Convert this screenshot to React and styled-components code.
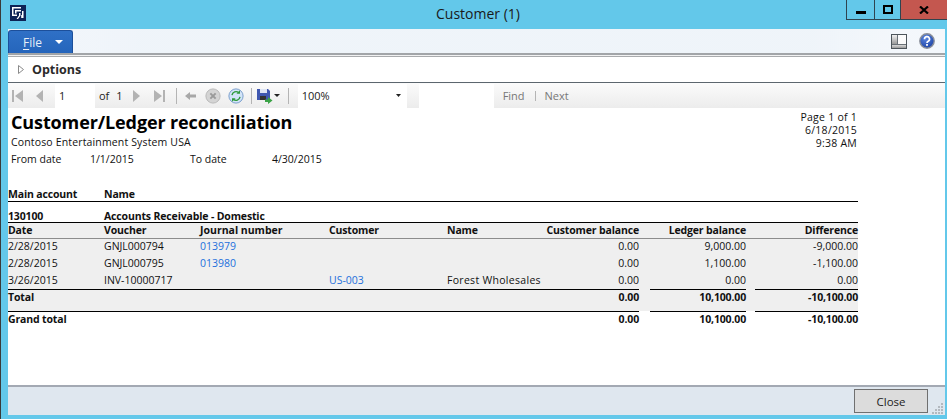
import React from 'react';
import styled, { createGlobalStyle } from 'styled-components';

const GlobalStyle = createGlobalStyle`
  html, body {
    margin: 0;
    padding: 0;
    height: 100%;
    overflow: hidden;
    background: #63c8ea;
    font-family: "Open Sans", "Noto Sans", sans-serif;
    color: #111;
  }
`;

const Window = styled.div`
  width: 947px;
  height: 419px;
  display: flex;
  flex-direction: column;
  background: #63c8ea;
  border-left: 1px solid #3a3a3a;
  box-sizing: border-box;
`;

const TitleBar = styled.div`
  height: 29px;
  flex: none;
  display: flex;
  align-items: flex-start;
  padding-left: 9px;
`;

const AppIcon = styled.svg`
  width: 16px;
  height: 16px;
  margin-top: 5px;
  flex: none;
`;

const TitleText = styled.div`
  flex: 1;
  text-align: center;
  font-size: 14px;
  line-height: 28px;
  color: #1a1a1a;
  padding-left: 84px;
`;

const WinControls = styled.div`
  display: flex;
  height: 19px;
  border-bottom: 1px solid #2f4450;
  border-left: 1px solid #2f4450;
  flex: none;
`;

const WinButton = styled.div`
  width: ${p => p.$w}px;
  display: flex;
  align-items: center;
  justify-content: center;
  background: ${p => p.$close ? '#c4574f' : 'transparent'};
  border-right: ${p => p.$close ? 'none' : '1px solid #2f4450'};
`;

const Client = styled.div`
  flex: 1;
  min-height: 0;
  margin: 0 2px 4px 7px;
  display: flex;
  flex-direction: column;
  background: #fff;
`;

const MenuBar = styled.div`
  height: 24px;
  flex: none;
  display: flex;
  align-items: flex-end;
  justify-content: space-between;
  box-sizing: border-box;
  background:
    radial-gradient(circle at 1px 1px, #e6eef7 0.6px, transparent 0.8px) 0 0 / 2px 2px,
    linear-gradient(90deg, #fff 0, #f6f9fc 14%, #f6f9fc 86%, #fff 95%);
`;

const FileTab = styled.div`
  width: 65px;
  height: 23px;
  box-sizing: border-box;
  display: flex;
  align-items: center;
  gap: 13px;
  padding-left: 14px;
  border: 1px solid #1c4f9a;
  border-bottom: none;
  border-radius: 3px 3px 0 0;
  background: linear-gradient(180deg, #2f70c6 0, #2565bb 100%);
  color: #e8eff8;
  font-size: 12px;

  u { text-underline-offset: 2px; }
`;

const MenuIcons = styled.div`
  display: flex;
  align-items: center;
  gap: 12px;
  margin: 0 10px 4px 0;
`;

const MenuRule = styled.div`
  height: 4px;
  flex: none;
  border-top: 2px solid #a2a5a8;
  border-bottom: 1px solid #a9abad;
  box-sizing: border-box;
  background: #f2f2f2;
`;

const OptionsBar = styled.div`
  height: 26px;
  flex: none;
  display: flex;
  align-items: center;
  gap: 8px;
  padding-left: 10px;
  box-sizing: border-box;
  font-size: 12.5px;
  font-weight: 700;
  color: #2b2b2b;
  background: #fff;
  border-bottom: 1px solid #5c666e;
`;

const Toolbar = styled.div`
  height: 25px;
  flex: none;
  display: flex;
  align-items: center;
  box-sizing: border-box;
  padding-left: 3px;
  background: linear-gradient(180deg, #fbfbfb 0, #ececec 100%);
  font-size: 11px;
  color: #333;
`;

const ToolIcon = styled.svg`
  flex: none;
  width: 16px;
  height: 16px;
  margin-left: ${p => p.$ml || 0}px;
`;

const ToolInput = styled.div`
  flex: none;
  width: ${p => p.$w}px;
  height: 24px;
  margin-left: ${p => p.$ml || 0}px;
  display: flex;
  align-items: center;
  justify-content: space-between;
  box-sizing: border-box;
  padding: 0 6px 0 4px;
  background: #fff;
  color: #222;
`;

const ToolSep = styled.div`
  flex: none;
  width: 1px;
  height: ${p => p.$h || 16}px;
  background: #b4b4b4;
  margin-left: ${p => p.$ml || 0}px;
`;

const ToolLabel = styled.span`
  flex: none;
  margin-left: ${p => p.$ml || 0}px;
  color: ${p => p.$muted ? '#777' : '#222'};
`;

const Caret = styled.svg`
  flex: none;
  margin-left: ${p => p.$ml || 0}px;
`;

const Report = styled.div`
  flex: 1;
  min-height: 0;
  display: flex;
  flex-direction: column;
  background: #fff;
  font-size: 10.5px;
  line-height: 15px;
  color: #111;
  border-bottom: 2px solid #a3a9b3;
`;

const ReportHead = styled.div`
  height: 78px;
  flex: none;
  width: 850px;
  display: flex;
  justify-content: space-between;
  box-sizing: border-box;
  padding: 2px 1px 0 3px;
`;

const ReportTitle = styled.div`
  font-size: 18px;
  font-weight: 700;
  line-height: 25px;
  letter-spacing: -0.12px;
  color: #000;
`;

const Company = styled.div`
  letter-spacing: 0.15px;
`;

const DateLine = styled.div`
  display: grid;
  grid-template-columns: 79px 100px 82px 1fr;
  margin-top: 2px;
`;

const PageInfo = styled.div`
  text-align: right;
  padding-top: 1px;
  line-height: 13px;
  font-size: 10.5px;
  letter-spacing: 0.25px;
`;

const Table = styled.div`
  width: 850px;
  display: flex;
  flex-direction: column;
`;

const Row = styled.div`
  display: grid;
  grid-template-columns: 96px 96px 129px 118px 93px 99px 107px 112px;
  height: ${p => p.$h || 17}px;
  padding-top: ${p => p.$pt || 0}px;
  padding-bottom: ${p => p.$pb || 0}px;
  align-items: center;
  white-space: nowrap;
  font-weight: ${p => p.$bold ? 700 : 400};
  background: ${p => p.$shade ? '#efefef' : 'transparent'};
  border-top: ${p => p.$line ? '1px solid #000' : 'none'};
  border-bottom: ${p => p.$under || 'none'};
  box-sizing: border-box;
  letter-spacing: ${p => p.$bold ? '-0.15px' : '0'};
`;

const Num = styled.div`
  text-align: right;
`;

const ReportLink = styled.span`
  color: #2470dc;
`;

const Wide = styled.div`
  grid-column: 2 / -1;
`;

const PartyName = styled.div`
  letter-spacing: 0.3px;
`;

const JournalHead = styled.div`
  letter-spacing: 0;
`;

const RuleRow = styled.div`
  display: grid;
  grid-template-columns: 631px 11px 96px 9px 103px;
  height: 1px;
  background: ${p => p.$shade ? '#efefef' : 'transparent'};
`;

const Rule = styled.div`
  background: #000;
`;

const Spacer = styled.div`
  height: ${p => p.$h}px;
  flex: none;
  background: ${p => p.$shade ? '#efefef' : 'transparent'};
`;

const Footer = styled.div`
  height: 28px;
  flex: none;
  display: flex;
  justify-content: flex-end;
  align-items: flex-start;
  padding: 2px 17px 0 0;
  box-sizing: border-box;
  background: #dfe7ef;
  position: relative;
`;

const CloseButton = styled.button`
  width: 74px;
  height: 24px;
  background: #dcdcdc;
  border: 1px solid #707070;
  font: inherit;
  font-size: 11.5px;
  color: #222;
  padding: 0;
`;

const Grip = styled.svg`
  position: absolute;
  right: 1px;
  bottom: 1px;
`;

function Nav({ d, ml, fill = '#b3b3b3' }) {
  return (
    <ToolIcon viewBox="0 0 16 16" $ml={ml}>
      <path d={d} fill={fill} />
    </ToolIcon>
  );
}

const App = () => (
  <>
    <GlobalStyle />
    <Window>
      <TitleBar>
        <AppIcon viewBox="0 0 16 16">
          <rect width="16" height="16" fill="#0d2356" />
          <path d="M2 2h9v1.5H3.5v6H7V11H2z" fill="#fff" />
          <path d="M5 5h6v1.5H6.5v2H5zM9 8h1.5v2.5L8 14H6.5L9 10.5z" fill="#fff" />
          <path d="M12 6h1.5v7H12zM11 10h.8v3H11z" fill="#fff" />
        </AppIcon>
        <TitleText>Customer (1)</TitleText>
        <WinControls>
          <WinButton $w={27}>
            <svg width="10" height="10" viewBox="0 0 10 10"><rect y="6" width="10" height="3" fill="#000" /></svg>
          </WinButton>
          <WinButton $w={25}>
            <svg width="10" height="9" viewBox="0 0 10 9"><rect x="1" y="1" width="8" height="7" fill="none" stroke="#000" strokeWidth="2" /></svg>
          </WinButton>
          <WinButton $w={46} $close>
            <svg width="10" height="8" viewBox="0 0 10 8"><path d="M1 0.5l8 7M9 0.5l-8 7" stroke="#000" strokeWidth="2.2" /></svg>
          </WinButton>
        </WinControls>
      </TitleBar>

      <Client>
        <MenuBar>
          <FileTab>
            <span><u>F</u>ile</span>
            <svg width="8" height="4" viewBox="0 0 8 4"><path d="M0 0h8L4 4z" fill="#fff" /></svg>
          </FileTab>
          <MenuIcons>
            <svg width="16" height="15" viewBox="0 0 16 15">
              <defs>
                <linearGradient id="pane" x1="0" y1="0" x2="0" y2="1">
                  <stop offset="0" stopColor="#f0f0f0" />
                  <stop offset="1" stopColor="#9a9a9a" />
                </linearGradient>
              </defs>
              <rect x="0.5" y="0.5" width="15" height="14" fill="#fbfbfb" stroke="#4d555b" />
              <rect x="1" y="1" width="5" height="9" fill="url(#pane)" />
              <rect x="1" y="10" width="14" height="4" fill="url(#pane)" />
              <path d="M6.5 1v9M1 10.5h14" stroke="#6a7177" />
            </svg>
            <svg width="16" height="16" viewBox="0 0 16 16">
              <defs>
                <radialGradient id="help" cx="0.4" cy="0.3" r="0.8">
                  <stop offset="0" stopColor="#5a86e0" />
                  <stop offset="1" stopColor="#173c9e" />
                </radialGradient>
              </defs>
              <circle cx="8" cy="8" r="7.2" fill="url(#help)" stroke="#8a8f99" strokeWidth="1.4" />
              <path d="M5.5 6.2a2.5 2.5 0 1 1 3.7 2.1c-.8.5-1.2.9-1.2 1.7" fill="none" stroke="#fff" strokeWidth="1.7" />
              <rect x="7.1" y="11" width="1.8" height="1.8" fill="#fff" />
            </svg>
          </MenuIcons>
        </MenuBar>
        <MenuRule />

        <OptionsBar>
          <svg width="6" height="9" viewBox="0 0 6 9"><path d="M0.5 0.5l5 4-5 4z" fill="#fff" stroke="#8a8a8a" /></svg>
          Options
        </OptionsBar>

        <Toolbar>
          <Nav d="M1 2h2v12H1zM4 8l8-6v12z" />
          <Nav d="M5 8l7-6v12z" ml={4} />
          <ToolInput $w={40} $ml={8}>1</ToolInput>
          <ToolLabel $ml={4}>of</ToolLabel>
          <ToolLabel $ml={7}>1</ToolLabel>
          <Nav d="M4 2l7 6-7 6z" ml={6} />
          <Nav d="M4 2l8 6-8 6zM13 2h2v12h-2z" ml={5} />
          <ToolSep $ml={10} />
          <Nav d="M2 8l5-4v2.5h6v3H7V12z" ml={6} fill="#a8a8a8" />
          <ToolIcon viewBox="0 0 18 18" $ml={6}>
            <circle cx="9" cy="9" r="8" fill="#d4d4d4" stroke="#b5b5b5" />
            <path d="M6 6l6 6M12 6l-6 6" stroke="#9a9a9a" strokeWidth="2.2" />
          </ToolIcon>
          <ToolIcon viewBox="0 0 18 18" $ml={7}>
            <circle cx="9" cy="9" r="8" fill="#d3e4f8" stroke="#6f96c8" />
            <path d="M4.5 8a4.6 4.6 0 0 1 7.5-2.8" fill="none" stroke="#2f9a3c" strokeWidth="1.6" />
            <path d="M13.5 2.5v4h-4z" fill="#2f9a3c" />
            <path d="M13.5 10a4.6 4.6 0 0 1-7.5 2.8" fill="none" stroke="#2f9a3c" strokeWidth="1.6" />
            <path d="M4.5 15.5v-4h4z" fill="#2f9a3c" />
          </ToolIcon>
          <ToolSep $ml={7} />
          <ToolIcon viewBox="0 0 16 16" $ml={5}>
            <path d="M0 1h11l2 2v9H0z" fill="#3f57b0" />
            <rect x="3" y="1" width="7" height="4" fill="#dfe6f5" />
            <rect x="3" y="8" width="6" height="4" fill="#333" />
            <path d="M8 11.5h3V9l4.5 3.5L11 16v-2H8z" fill="#3aa346" />
          </ToolIcon>
          <Caret width="6" height="3" viewBox="0 0 6 3" $ml={1}><path d="M0 0h6L3 3z" fill="#222" /></Caret>
          <ToolSep $ml={8} />
          <ToolInput $w={109} $ml={9}>
            <span>100%</span>
            <svg width="5" height="3" viewBox="0 0 5 3"><path d="M0 0h5L2.5 3z" fill="#222" /></svg>
          </ToolInput>
          <ToolInput $w={75} $ml={12} />
          <ToolLabel $ml={9} $muted>Find</ToolLabel>
          <ToolSep $ml={10} $h={10} />
          <ToolLabel $ml={9} $muted>Next</ToolLabel>
        </Toolbar>

        <Report>
          <ReportHead>
            <div>
              <ReportTitle>Customer/Ledger reconciliation</ReportTitle>
              <Company>Contoso Entertainment System USA</Company>
              <DateLine>
                <span>From date</span>
                <span>1/1/2015</span>
                <span>To date</span>
                <span>4/30/2015</span>
              </DateLine>
            </div>
            <PageInfo>
              <div>Page 1 of 1</div>
              <div>6/18/2015</div>
              <div>9:38 AM</div>
            </PageInfo>
          </ReportHead>

          <Table>
            <Row $bold $h={16} $pt={1} $under="1px solid #000">
              <div>Main account</div>
              <div>Name</div>
            </Row>
            <Spacer $h={7} />
            <Row $bold $h={13}>
              <div>130100</div>
              <Wide>Accounts Receivable - Domestic</Wide>
            </Row>
            <Row $bold $shade $line $h={17} $pb={2} $under="1px solid #8c8c8c">
              <div>Date</div>
              <div>Voucher</div>
              <JournalHead>Journal number</JournalHead>
              <div>Customer</div>
              <div>Name</div>
              <Num>Customer balance</Num>
              <Num>Ledger balance</Num>
              <Num>Difference</Num>
            </Row>
            <Row $shade $pb={2}>
              <div>2/28/2015</div>
              <div>GNJL000794</div>
              <ReportLink>013979</ReportLink>
              <div />
              <div />
              <Num>0.00</Num>
              <Num>9,000.00</Num>
              <Num>-9,000.00</Num>
            </Row>
            <Row $shade $pb={2}>
              <div>2/28/2015</div>
              <div>GNJL000795</div>
              <ReportLink>013980</ReportLink>
              <div />
              <div />
              <Num>0.00</Num>
              <Num>1,100.00</Num>
              <Num>-1,100.00</Num>
            </Row>
            <Row $shade $h={16} $pb={1}>
              <div>3/26/2015</div>
              <div>INV-10000717</div>
              <div />
              <ReportLink>US-003</ReportLink>
              <PartyName>Forest Wholesales</PartyName>
              <Num>0.00</Num>
              <Num>0.00</Num>
              <Num>0.00</Num>
            </Row>
            <RuleRow $shade><Rule /><span /><Rule /><span /><Rule /></RuleRow>
            <Row $bold $shade $h={14}>
              <div>Total</div>
              <div />
              <div />
              <div />
              <div />
              <Num>0.00</Num>
              <Num>10,100.00</Num>
              <Num>-10,100.00</Num>
            </Row>
            <Spacer $h={7} $shade />
            <RuleRow><Rule /><span /><Rule /><span /><Rule /></RuleRow>
            <Row $bold $h={14}>
              <div>Grand total</div>
              <div />
              <div />
              <div />
              <div />
              <Num>0.00</Num>
              <Num>10,100.00</Num>
              <Num>-10,100.00</Num>
            </Row>
          </Table>
        </Report>

        <Footer>
          <CloseButton>Close</CloseButton>
          <Grip width="12" height="11" viewBox="0 0 12 11">
            <path d="M9 0h2v2H9zM6 3h2v2H6zM9 3h2v2H9zM3 6h2v2H3zM6 6h2v2H6zM9 6h2v2H9zM0 9h2v2H0zM3 9h2v2H3zM6 9h2v2H6zM9 9h2v2H9z" fill="#b3b9bf" />
          </Grip>
        </Footer>
      </Client>
    </Window>
  </>
);

export default App;
